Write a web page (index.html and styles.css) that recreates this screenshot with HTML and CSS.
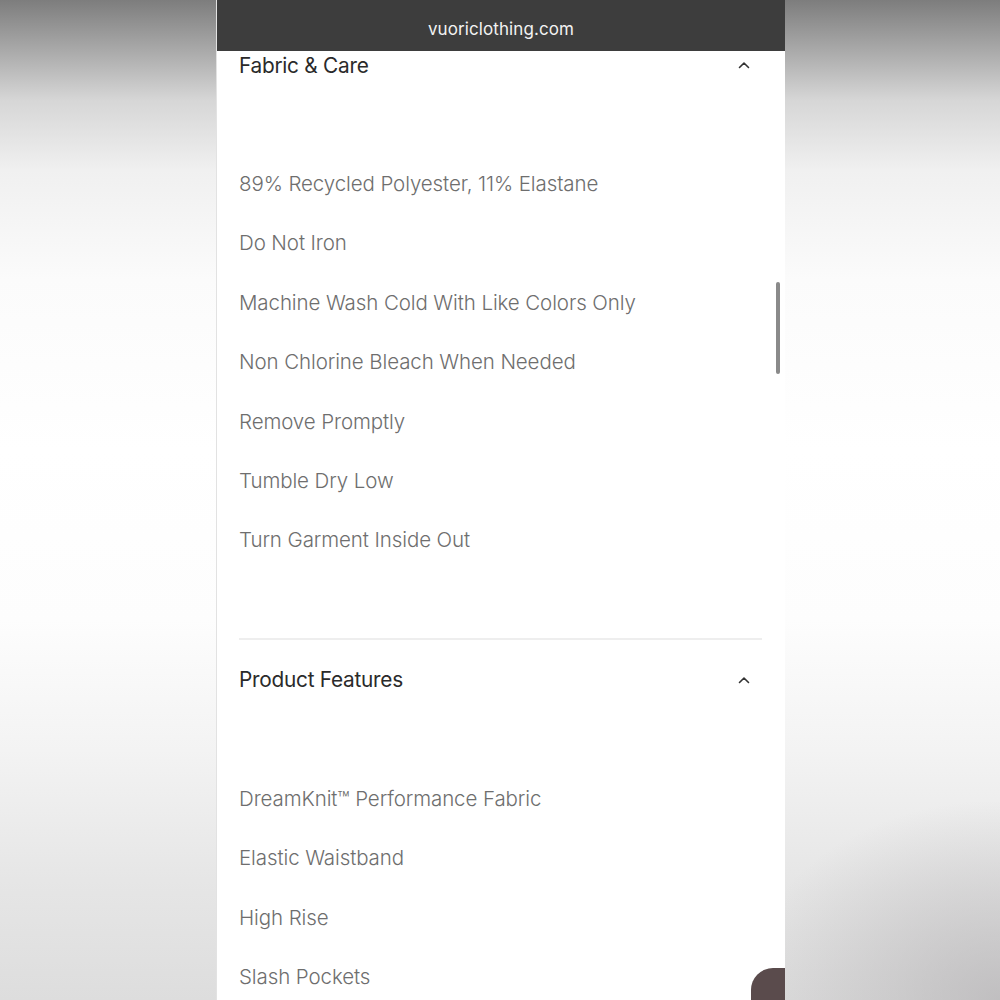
FILE: index.html
```html
<!DOCTYPE html>
<html lang="en">
<head>
<meta charset="utf-8">
<title>vuoriclothing.com</title>
<link rel="stylesheet" href="styles.css">
</head>
<body>
<div class="stage">
  <div class="phone">
    <header class="urlbar">vuoriclothing.com</header>
    <main class="content">
      <section class="acc">
        <div class="acc-head">
          <h2>Fabric &amp; Care</h2>
          <svg class="chev" width="12" height="8" viewBox="0 0 12 8"><polyline points="1.5,6.5 6,2 10.5,6.5" fill="none" stroke="#333" stroke-width="1.6" stroke-linecap="round" stroke-linejoin="round"/></svg>
        </div>
        <ul class="acc-list">
          <li>89% Recycled Polyester, 11% Elastane</li>
          <li>Do Not Iron</li>
          <li>Machine Wash Cold With Like Colors Only</li>
          <li>Non Chlorine Bleach When Needed</li>
          <li>Remove Promptly</li>
          <li>Tumble Dry Low</li>
          <li>Turn Garment Inside Out</li>
        </ul>
      </section>
      <section class="acc acc-next">
        <div class="acc-head">
          <h2>Product Features</h2>
          <svg class="chev" width="12" height="8" viewBox="0 0 12 8"><polyline points="1.5,6.5 6,2 10.5,6.5" fill="none" stroke="#333" stroke-width="1.6" stroke-linecap="round" stroke-linejoin="round"/></svg>
        </div>
        <ul class="acc-list">
          <li>DreamKnit™ Performance Fabric</li>
          <li>Elastic Waistband</li>
          <li>High Rise</li>
          <li>Slash Pockets</li>
        </ul>
      </section>
    </main>
    <div class="scrollbar"></div>
    <div class="fab"></div>
  </div>
</div>
</body>
</html>
```
FILE: styles.css
```css
html, body {
  margin: 0;
  padding: 0;
  height: 100%;
}
body {
  font-family: Inter, "Noto Sans", "Liberation Sans", sans-serif;
  background:
    radial-gradient(ellipse 260px 200px at 100% 100%, rgba(180,178,180,0.7), rgba(200,200,200,0) 100%),
    linear-gradient(to bottom, #7d7d7d 0%, #a9a9a9 5%, #d6d6d6 10%, #f0f0f0 17%, #fbfbfb 28%, #ffffff 45%, #fdfdfd 62%, #f3f3f3 75%, #e6e6e6 88%, #dddddd 100%);
  overflow: hidden;
}
.stage {
  display: flex;
  justify-content: flex-start;
  padding-left: 216px;
  height: 1000px;
}
.phone {
  position: relative;
  width: 569px;
  height: 1000px;
  background: #ffffff;
  overflow: hidden;
  border-left: 1px solid #e2e2e2;
  box-sizing: border-box;
}
.urlbar {
  height: 51px;
  background: #3d3d3d;
  color: #f2f2f2;
  font-size: 17px;
  letter-spacing: 0.1px;
  display: flex;
  align-items: flex-start;
  justify-content: center;
  padding-top: 18px;
  box-sizing: border-box;
  line-height: 22px;
}
.content {
  padding: 0 23px 0 22px;
}
.acc-head {
  display: flex;
  align-items: center;
  justify-content: space-between;
  height: 28px;
  padding-right: 12px;
}
.acc-head h2 {
  margin: 0;
  font-size: 20.8px;
  font-weight: 400;
  color: #2a2a2a;
  letter-spacing: -0.25px;
}
.chev {
  display: block;
}
.acc-list {
  list-style: none;
  margin: 75px 0 0 0;
  padding: 0;
}
.acc-list li {
  height: 59.4px;
  line-height: 59.4px;
  font-size: 20.5px;
  font-weight: 300;
  color: #6e6e6e;
  letter-spacing: -0.1px;
  white-space: nowrap;
}
.acc-next {
  border-top: 2px solid #eeeeee;
  margin-top: 68px;
  padding-top: 26px;
}
.scrollbar {
  position: absolute;
  right: 5px;
  top: 282px;
  width: 4px;
  height: 92px;
  border-radius: 2px;
  background: #8a8a8a;
}
.fab {
  position: absolute;
  left: 534px;
  top: 968px;
  width: 60px;
  height: 60px;
  background: #5a4b4c;
  border-top-left-radius: 22px;
}
```
